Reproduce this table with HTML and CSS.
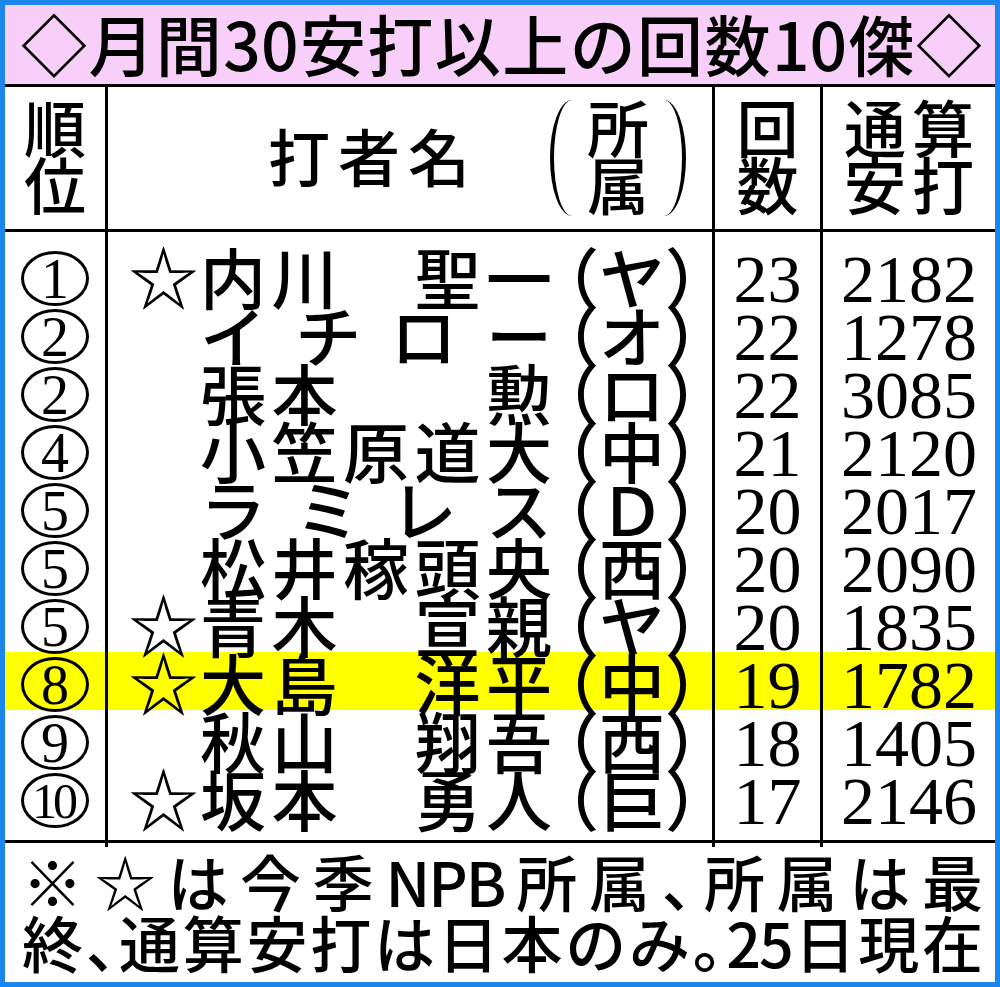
FILE: index.html
```html
<!DOCTYPE html>
<html lang="ja">
<head>
<meta charset="utf-8">
<title>月間30安打以上の回数10傑</title>
<link rel="stylesheet" href="styles.css">
</head>
<body>
<div class="frame">
  <h1 class="title">◇月間30安打以上の回数10傑◇</h1>
  <div class="table">
    <div class="row head">
      <div class="cell rank jp"><span class="stack">順<br>位</span></div>
      <div class="cell namecol jp">
        <span class="hname">打者名</span>
        <span class="haff">
          <span class="bracket left"></span>
          <span class="stack affstack">所<br>属</span>
          <span class="bracket right"></span>
        </span>
      </div>
      <div class="cell num jp"><span class="stack">回<br>数</span></div>
      <div class="cell total jp"><span class="stack wide">通算<br>安打</span></div>
    </div>
    <div class="body">
      <div class="row">
        <div class="cell rank"><span class="circ">1</span></div>
        <div class="cell namecol jp"><span class="star">☆</span><span class="nm">内川　聖一</span><span class="team"><span class="p">（</span>ヤ<span class="p">）</span></span></div>
        <div class="cell num">23</div>
        <div class="cell total">2182</div>
      </div>
      <div class="row">
        <div class="cell rank"><span class="circ">2</span></div>
        <div class="cell namecol jp"><span class="star"></span><span class="nm">イチロー</span><span class="team"><span class="p">（</span>オ<span class="p">）</span></span></div>
        <div class="cell num">22</div>
        <div class="cell total">1278</div>
      </div>
      <div class="row">
        <div class="cell rank"><span class="circ">2</span></div>
        <div class="cell namecol jp"><span class="star"></span><span class="nm">張本　　勲</span><span class="team"><span class="p">（</span>ロ<span class="p">）</span></span></div>
        <div class="cell num">22</div>
        <div class="cell total">3085</div>
      </div>
      <div class="row">
        <div class="cell rank"><span class="circ">4</span></div>
        <div class="cell namecol jp"><span class="star"></span><span class="nm">小笠原道大</span><span class="team"><span class="p">（</span>中<span class="p">）</span></span></div>
        <div class="cell num">21</div>
        <div class="cell total">2120</div>
      </div>
      <div class="row">
        <div class="cell rank"><span class="circ">5</span></div>
        <div class="cell namecol jp"><span class="star"></span><span class="nm">ラミレス</span><span class="team"><span class="p">（</span>Ｄ<span class="p">）</span></span></div>
        <div class="cell num">20</div>
        <div class="cell total">2017</div>
      </div>
      <div class="row">
        <div class="cell rank"><span class="circ">5</span></div>
        <div class="cell namecol jp"><span class="star"></span><span class="nm">松井稼頭央</span><span class="team"><span class="p">（</span>西<span class="p">）</span></span></div>
        <div class="cell num">20</div>
        <div class="cell total">2090</div>
      </div>
      <div class="row">
        <div class="cell rank"><span class="circ">5</span></div>
        <div class="cell namecol jp"><span class="star">☆</span><span class="nm">青木　宣親</span><span class="team"><span class="p">（</span>ヤ<span class="p">）</span></span></div>
        <div class="cell num">20</div>
        <div class="cell total">1835</div>
      </div>
      <div class="row hl">
        <div class="cell rank"><span class="circ">8</span></div>
        <div class="cell namecol jp"><span class="star">☆</span><span class="nm">大島　洋平</span><span class="team"><span class="p">（</span>中<span class="p">）</span></span></div>
        <div class="cell num">19</div>
        <div class="cell total">1782</div>
      </div>
      <div class="row">
        <div class="cell rank"><span class="circ">9</span></div>
        <div class="cell namecol jp"><span class="star"></span><span class="nm">秋山　翔吾</span><span class="team"><span class="p">（</span>西<span class="p">）</span></span></div>
        <div class="cell num">18</div>
        <div class="cell total">1405</div>
      </div>
      <div class="row">
        <div class="cell rank"><span class="circ ten">10</span></div>
        <div class="cell namecol jp"><span class="star">☆</span><span class="nm">坂本　勇人</span><span class="team"><span class="p">（</span>巨<span class="p">）</span></span></div>
        <div class="cell num">17</div>
        <div class="cell total">2146</div>
      </div>
    </div>
  </div>
  <div class="note">
    <p class="line">※☆は今季<span class="cond">NPB</span>所属<span class="p">、</span>所属は最</p>
    <p class="line">終<span class="p">、</span>通算安打は日本のみ<span class="p">。</span><span class="cond">25</span>日現在</p>
  </div>
</div>
</body>
</html>
```

FILE: styles.css
```css
html, body {
  margin: 0;
  padding: 0;
  background: #ffffff;
}

.frame {
  box-sizing: border-box;
  width: 1000px;
  height: 987px;
  border: 5px solid #1c86ee;
  background: #ffffff;
  color: #000000;
  font-family: "Noto Sans CJK JP", "Noto Sans", sans-serif;
  display: flex;
  flex-direction: column;
}

.title {
  box-sizing: border-box;
  margin: 0;
  height: 82px;
  padding: 0 13px 0 16px;
  background: #f8cff8;
  border-bottom: 3px solid #000;
  font-size: 66px;
  font-weight: 500;
  line-height: 74px;
  white-space: nowrap;
  text-align: justify;
  text-align-last: justify;
}

.jp {
  font-family: "Noto Sans CJK JP", sans-serif;
}

.row {
  display: grid;
  grid-template-columns: 100px 607px 108px 175px;
  height: 58px;
}

.cell {
  box-sizing: border-box;
  display: flex;
  align-items: center;
  justify-content: center;
  border-left: 3px solid #000;
  min-width: 0;
}

.cell.rank {
  border-left: none;
}

.head {
  height: 145px;
  border-bottom: 3px solid #000;
  box-sizing: border-box;
}

.head .cell {
  font-size: 62px;
  font-weight: 500;
  line-height: 57px;
  padding-bottom: 6px;
}

.stack {
  display: block;
  text-align: center;
}

.stack.wide {
  letter-spacing: 6px;
  margin-right: -6px;
}

.head .namecol {
  justify-content: flex-start;
  padding-bottom: 0;
}

.hname {
  margin-left: 160px;
  letter-spacing: 8px;
  padding-bottom: 6px;
}

.haff {
  display: flex;
  align-items: center;
  margin-left: 72px;
}

.bracket {
  display: block;
  box-sizing: border-box;
  width: 22px;
  height: 116px;
}

.bracket.left {
  border-left: 4px solid #000;
  border-radius: 100% 0 0 100% / 50% 0 0 50%;
}

.bracket.right {
  border-right: 4px solid #000;
  border-radius: 0 100% 100% 0 / 0 50% 50% 0;
}

.affstack {
  width: 68px;
  margin: 0 12px 6px 12px;
}

.body {
  border-bottom: 3px solid #000;
}

.body .row:first-child {
  height: 72px;
}

.body .row:first-child .cell {
  padding-top: 14px;
}

.body .row:last-child {
  height: 72px;
}

.body .row:last-child .cell {
  padding-bottom: 14px;
}

.body .row:last-child .cell.namecol {
  padding-bottom: 21px;
}

.row.hl {
  background: #ffff00;
}

.circ {
  box-sizing: border-box;
  display: flex;
  align-items: center;
  justify-content: center;
  flex: none;
  width: 68px;
  height: 55px;
  border: 3px solid #000;
  border-radius: 50%;
  font-family: "Liberation Serif", serif;
  font-size: 56px;
  line-height: 1;
}

.circ.ten {
  letter-spacing: -4px;
  text-indent: -4px;
  font-size: 50px;
}

.body .namecol {
  justify-content: flex-start;
  padding-left: 19px;
  padding-bottom: 7px;
  font-size: 66px;
  font-weight: 500;
  line-height: 58px;
  white-space: nowrap;
}

.star {
  display: block;
  width: 73px;
  text-align: center;
  font-size: 70px;
}

.nm {
  display: block;
  width: 352px;
  text-align: justify;
  text-align-last: justify;
}

.team {
  display: block;
  margin-left: 14px;
}

.p {
  font-feature-settings: "halt";
}

.body .num,
.body .total {
  font-family: "Liberation Serif", serif;
  font-size: 68px;
  line-height: 58px;
}

.note {
  flex: 1;
  padding: 7px 12px 0 17px;
  font-size: 61px;
  line-height: 61px;
  font-weight: 500;
}

.line {
  margin: 0;
  white-space: nowrap;
  text-align: justify;
  text-align-last: justify;
}

.cond {
  letter-spacing: -2px;
}
```
